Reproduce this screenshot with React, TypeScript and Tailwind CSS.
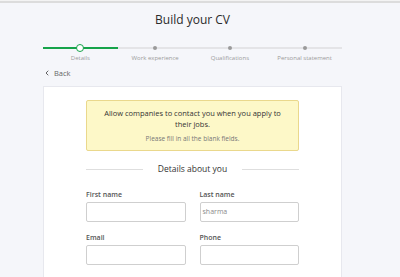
import React from 'react';
import { ChevronLeft } from 'lucide-react';

const steps = ['Details', 'Work experience', 'Qualifications', 'Personal statement'];

// Barra de progresso das etapas do CV
const Stepper: React.FC<{ current: number }> = ({ current }) => (
  <div className="grid grid-cols-4 mt-[16px]">
    {steps.map((label, i) => (
      <div key={label} className="flex flex-col items-center">
        <div className="relative w-full h-[8px] flex items-center">
          <div className={i <= current ? 'w-full h-[2.5px] bg-[#16a34a]' : 'w-full h-[2px] bg-[#e4e4e7]'} />
          {i === current ? (
            <span className="absolute left-1/2 top-1/2 -translate-x-1/2 -translate-y-1/2 w-[8px] h-[8px] rounded-full bg-white border-[1.5px] border-[#16a34a]" />
          ) : (
            <span className="absolute left-1/2 top-1/2 -translate-x-1/2 -translate-y-1/2 w-[4px] h-[4px] rounded-full bg-[#9a9a9a]" />
          )}
        </div>
        <span className="mt-[2px] text-[6px] leading-[8px] text-[#9b9b9b]">{label}</span>
      </div>
    ))}
  </div>
);

const Field: React.FC<{ label: string; value?: string; className?: string }> = ({ label, value, className }) => (
  <div className={className}>
    <p className="text-[7px] leading-[10px] font-semibold text-[#555]">{label}</p>
    <div className="mt-[2px] h-[20px] border border-[#cfcfcf] rounded-[2px] bg-white flex items-center px-[2px]">
      {value && <span className="text-[7px] text-[#8a8a8a]">{value}</span>}
    </div>
  </div>
);

export default function App() {
  return (
    <div className="min-h-screen bg-[#f5f6fa] font-['Open_Sans',sans-serif] overflow-hidden">
      <div className="h-[1px] bg-[#f3f3f3]" />
      <div className="h-[2px] bg-[#dcdcdc]" />
      <div className="ml-[43px] w-[299px]">
        <h1 className="mt-[9px] text-center text-[12px] leading-[16px] text-[#2b2b2b]">Build your CV</h1>

        <Stepper current={0} />

        <div className="mt-[6px] flex items-center gap-[3px] text-[7.5px] leading-[10px] text-[#666]">
          <ChevronLeft size={8} strokeWidth={2.5} className="text-[#444]" />
          <span>Back</span>
        </div>

        <div className="mt-[8px] bg-white border border-[#e7e8ee] px-[42px] pt-[13px] pb-[20px]">
          <div className="bg-[#fdf8c8] border border-[#ead88c] rounded-[2px] pt-[7px] pb-[6px] px-[10px] text-center">
            <p className="text-[7.5px] leading-[11px] text-[#333]">
              Allow companies to contact you when you apply to their jobs.
            </p>
            <p className="mt-[4px] text-[6.5px] leading-[10px] text-[#777]">Please fill in all the blank fields.</p>
          </div>

          <div className="mt-[12px] flex items-center gap-[15px]">
            <div className="flex-1 h-px bg-[#dedede]" />
            <span className="text-[8.5px] leading-[12px] text-[#333]">Details about you</span>
            <div className="flex-1 h-px bg-[#dedede]" />
          </div>

          <div className="mt-[15px] grid grid-cols-2 gap-x-[14px] gap-y-[11px]">
            <Field label="First name" />
            <Field label="Last name" value="sharma" />
            <Field label="Email" />
            <Field label="Phone" />
          </div>
        </div>
      </div>
    </div>
  );
}
